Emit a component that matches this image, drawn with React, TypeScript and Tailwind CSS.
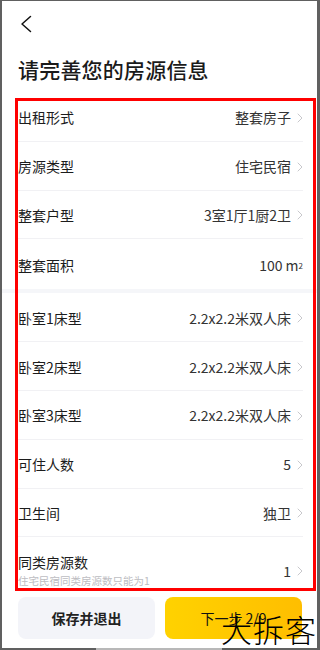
import React from 'react'

type Row = { label: string; value: React.ReactNode; arrow?: boolean }

const topRows: Row[] = [
  { label: '出租形式', value: '整套房子', arrow: true },
  { label: '房源类型', value: '住宅民宿', arrow: true },
  { label: '整套户型', value: '3室1厅1厨2卫', arrow: true },
]

const roomRows: Row[] = [
  { label: '卧室1床型', value: '2.2x2.2米双人床', arrow: true },
  { label: '卧室2床型', value: '2.2x2.2米双人床', arrow: true },
  { label: '卧室3床型', value: '2.2x2.2米双人床', arrow: true },
  { label: '可住人数', value: '5', arrow: true },
  { label: '卫生间', value: '独卫', arrow: true },
]

function Chevron() {
  return (
    <svg width="6" height="10" viewBox="0 0 6 10" className="ml-[6px] shrink-0">
      <path d="M1 1l4 4-4 4" fill="none" stroke="#c8c8cc" strokeWidth="1" strokeLinecap="round" strokeLinejoin="round" />
    </svg>
  )
}

function ListRow({ label, value, arrow, last }: Row & { last?: boolean }) {
  return (
    <div className={`h-[48.8px] flex items-center justify-between pt-[2px] ${last ? '' : 'border-b border-[#f1f1f4]'}`}>
      <span className="text-[14px] text-[#1c1c1c]">{label}</span>
      <div className="flex items-center text-[14px] text-[#333]">
        <span>{value}</span>
        {arrow && <Chevron />}
      </div>
    </div>
  )
}

export default function App() {
  return (
    <div
      className="relative w-[320px] h-[650px] overflow-hidden bg-white flex flex-col"
      style={{ fontFamily: '"Noto Sans CJK SC", "Noto Sans", sans-serif' }}
    >
      <div className="flex-1 flex flex-col border-l-2 border-r-[3px] border-t border-[#606060]">
        {/* header */}
        <div className="h-[46px] flex items-center pl-[18px]">
          <svg width="12" height="18" viewBox="0 0 12 18">
            <path d="M10.5 1.5L2 9l8.5 7.5" fill="none" stroke="#111" strokeWidth="1.5" strokeLinecap="round" strokeLinejoin="round" />
          </svg>
        </div>
        <div className="h-[46px] flex items-center pl-[16px]">
          <h1 className="text-[21px] font-medium text-[#1a1a1a] tracking-[0.2px]">请完善您的房源信息</h1>
        </div>

        {/* list */}
        <div className="pl-[16px] pr-[14px]">
          {topRows.map((r) => (
            <ListRow key={r.label} {...r} />
          ))}
          <div className="h-[50px] flex items-center justify-between pt-[2px]">
            <span className="text-[14px] text-[#1c1c1c]">整套面积</span>
            <span className="text-[14px] text-[#333]">
              100 m<sup className="text-[8px] relative -top-[2px]">2</sup>
            </span>
          </div>
        </div>
        <div className="h-[4px] bg-[#f5f6f9]" />
        <div className="pl-[16px] pr-[14px]">
          {roomRows.map((r) => (
            <ListRow key={r.label} {...r} />
          ))}
          <div className="h-[56px] flex items-center justify-between">
            <div className="flex flex-col pt-[10px]">
              <span className="text-[14px] text-[#1c1c1c] leading-[20px]">同类房源数</span>
              <span className="text-[10.5px] text-[#bdbdc2] leading-[16px] mt-[1px]">住宅民宿同类房源数只能为1</span>
            </div>
            <div className="flex items-center text-[14px] text-[#333] pt-[12px]">
              <span>1</span>
              <Chevron />
            </div>
          </div>
        </div>

        {/* buttons */}
        <div className="flex gap-[10px] pl-[16px] pr-[15px] pt-[4px]">
          <button className="w-[137px] h-[42px] rounded-[8px] bg-[#f3f4f9] text-[14px] font-bold text-[#222]">
            保存并退出
          </button>
          <button className="w-[137px] h-[42px] rounded-[8px] bg-gradient-to-r from-[#ffd200] to-[#ffbe00] text-[14px] text-[#111]">
            下一步 2/9
          </button>
        </div>
      </div>

      {/* bottom frame edge */}
      <div className="h-[2px] flex">
        <div className="w-[96px] bg-[#606060]" />
        <div className="w-[126px] bg-[#b8b8b8]" />
        <div className="flex-1 bg-[#606060]" />
      </div>

      {/* annotation box */}
      <div className="absolute left-[15px] top-[98px] w-[301px] h-[493px] border-[3px] border-[#ff0000] pointer-events-none" />

      {/* watermark */}
      <div className="absolute left-[221px] top-[613px] text-[31px] font-light text-black leading-none tracking-[1px] pointer-events-none">
        大拆客
      </div>
    </div>
  )
}
